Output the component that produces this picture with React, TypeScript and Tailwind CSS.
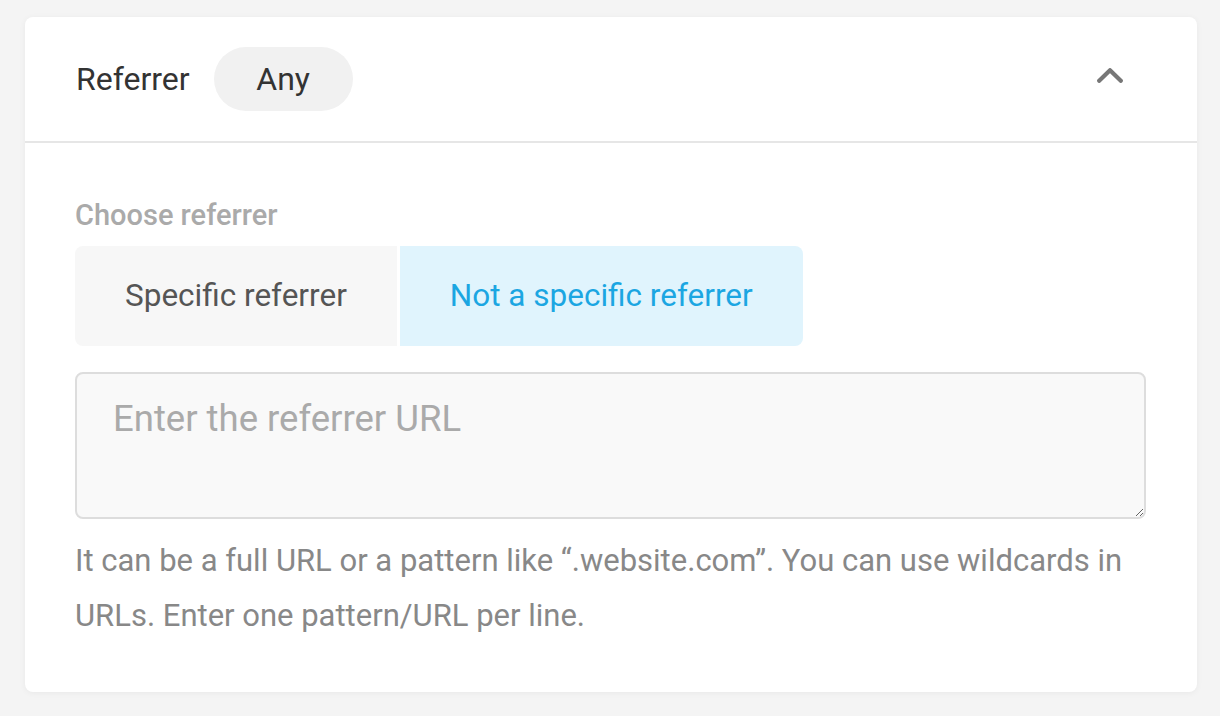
import React from "react";

export default function App() {
  return (
    <div
      className="w-[1220px] h-[716px] bg-[#f4f4f4] pt-[17px] pl-[25px]"
      style={{ fontFamily: "Roboto, 'Liberation Sans', sans-serif" }}
    >
      <div className="w-[1172px] h-[675px] bg-white rounded-[8px] shadow-[0_1px_6px_rgba(0,0,0,0.05)]">
        <div className="h-[126px] border-b-2 border-[#e6e6e6] flex items-center pl-[51px] pr-[74px]">
          <span className="text-[32px] text-[#333] leading-none">Referrer</span>
          <span className="ml-[24px] w-[139px] h-[64px] rounded-full bg-[#f1f1f1] flex items-center justify-center text-[32px] text-[#333]">
            Any
          </span>
          <div className="ml-auto mb-[7px] flex">
            <svg width="26" height="15" viewBox="0 0 26 15">
              <polyline
                points="2.2,12.8 13,2.2 23.8,12.8"
                fill="none"
                stroke="#777"
                strokeWidth="4.2"
                strokeLinecap="round"
                strokeLinejoin="round"
              />
            </svg>
          </div>
        </div>
        <div className="pl-[50px] pr-[51px] pt-[56px]">
          <div className="text-[29px] leading-[32px] font-medium text-[#aaa]">Choose referrer</div>
          <div className="mt-[15px] flex gap-[3px]">
            <button className="h-[100px] px-[50px] bg-[#f7f7f7] rounded-l-[8px] text-[31.5px] text-[#555]">
              Specific referrer
            </button>
            <button className="h-[100px] px-[50px] bg-[#e0f4fd] rounded-r-[8px] text-[31.5px] text-[#1ba6e2]">
              Not a specific referrer
            </button>
          </div>
          <textarea
            className="block mt-[26px] w-full h-[147px] border-2 border-[#dddddd] rounded-[8px] bg-[#f9f9f9] pl-[36px] pt-[21px] text-[36.5px] leading-[48px] placeholder:text-[#aaa] outline-none"
            placeholder="Enter the referrer URL"
          />
          <p className="mt-[14px] text-[31px] leading-[55px] text-[#888]">
            It can be a full URL or a pattern like “.website.com”. You can use wildcards in URLs. Enter one pattern/URL per line.
          </p>
        </div>
      </div>
    </div>
  );
}
